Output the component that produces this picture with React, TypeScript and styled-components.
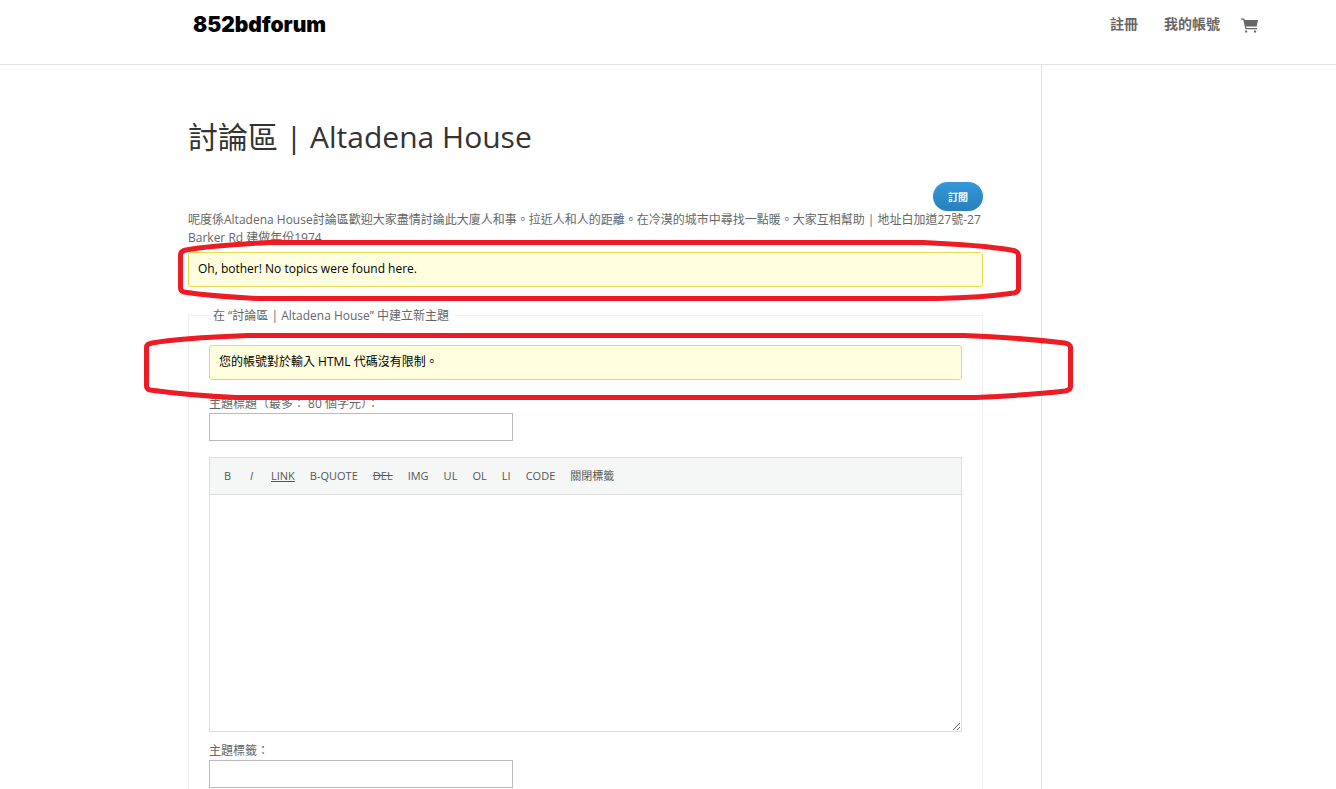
import React from "react";
import styled, { createGlobalStyle } from "styled-components";

const GlobalStyle = createGlobalStyle`
  *, *::before, *::after { box-sizing: border-box; }
  body {
    margin: 0;
    background: #fff;
    color: #666;
    font-family: "Open Sans", "Noto Sans CJK TC", sans-serif;
    font-size: 12px;
    line-height: 18px;
  }
`;

const Page = styled.div`
  display: flex;
  flex-direction: column;
  min-height: 100vh;
`;

const Header = styled.header`
  display: flex;
  justify-content: space-between;
  align-items: flex-start;
  height: 65px;
  padding: 12px 78px 0 193px;
  border-bottom: 1px solid #e2e2e2;
`;

const Logo = styled.a`
  color: #000;
  font-family: Inter, sans-serif;
  font-size: 21px;
  font-weight: 900;
  line-height: 26px;
  text-decoration: none;
`;

const Nav = styled.nav`
  display: flex;
  align-items: center;
  gap: 26px;
  height: 24px;
`;

const NavLink = styled.a`
  color: #666;
  font-size: 14px;
  font-weight: 700;
  line-height: 24px;
  text-decoration: none;
`;

const CartLink = styled.a`
  display: flex;
  margin-left: -5px;
  padding-top: 3px;
  color: #666;
`;

const Columns = styled.div`
  display: flex;
  flex: 1;
  padding: 0 78px 0 188px;
`;

const Main = styled.main`
  display: flex;
  flex: 1;
  flex-direction: column;
  padding: 57px 58px 0 0;
  border-right: 1px solid #e2e2e2;
`;

const Sidebar = styled.aside`
  width: 216px;
`;

const Title = styled.h1`
  margin: 0 0 30px;
  color: #333;
  font-size: 30px;
  font-weight: 400;
  line-height: 30px;
`;

const SubscribeButton = styled.button`
  align-self: flex-end;
  width: 50px;
  height: 29px;
  padding: 0;
  border: 0;
  border-radius: 15px;
  background: linear-gradient(#3498db, #2980b9);
  color: #fff;
  font: inherit;
  font-size: 10px;
  font-weight: 700;
`;

const Description = styled.p`
  margin: 0 0 5px;
`;

const Notice = styled.div`
  position: relative;
  height: 35px;
  padding: 7px 9px;
  border: 1px solid #e6db55;
  border-radius: 3px;
  background: #ffffe0;
  color: #000;
`;

const Marker = styled.svg<{ $side: number; $far: number; $top: number; $bottom: number }>`
  position: absolute;
  z-index: 1;
  top: -${(p) => p.$top}px;
  left: -${(p) => p.$side}px;
  width: calc(100% + ${(p) => p.$side + p.$far}px);
  height: calc(100% + ${(p) => p.$top + p.$bottom}px);
  fill: none;
  stroke: #ed1c24;
  stroke-width: 5px;
  stroke-linejoin: round;
  pointer-events: none;
`;

const TopicFieldset = styled.fieldset`
  display: flex;
  flex: 1;
  flex-direction: column;
  min-width: 0;
  margin: 19px 0 0;
  padding: 20px 20px 1px;
  border: 1px solid #eee;
  border-bottom: 0;
`;

const Legend = styled.legend`
  padding: 0 5px 0 4px;
  line-height: 19px;
`;

const Field = styled.div<{ $gap: number }>`
  display: flex;
  flex-direction: column;
  align-items: flex-start;
  margin-top: ${(p) => p.$gap}px;
`;

const TextInput = styled.input`
  width: 304px;
  max-width: 100%;
  height: 28px;
  padding: 2px 6px;
  border: 1px solid #bbb;
  background: #fff;
  color: #4e4e4e;
  font: inherit;
`;

const Editor = styled.div`
  display: flex;
  flex-direction: column;
  margin-top: 16px;
  border: 1px solid #ddd;
`;

const Toolbar = styled.div`
  display: flex;
  align-items: center;
  gap: 15px;
  height: 37px;
  padding: 0 13px;
  border-bottom: 1px solid #ddd;
  background: #f5f7f7;
`;

const ToolButton = styled.button<{ $look?: "italic" | "underline" | "strike" }>`
  min-width: 9px;
  padding: 0;
  border: 0;
  background: none;
  color: #555;
  font: inherit;
  font-size: 11px;
  font-style: ${(p) => (p.$look === "italic" ? "italic" : "normal")};
  text-decoration: ${(p) =>
    p.$look === "underline" ? "underline" : p.$look === "strike" ? "line-through" : "none"};
`;

const Content = styled.textarea`
  display: block;
  width: 100%;
  height: 236px;
  padding: 8px;
  border: 0;
  background: #fff;
  color: #333;
  font: inherit;
  resize: vertical;
`;

const tools: { label: string; look?: "italic" | "underline" | "strike" }[] = [
  { label: "B" },
  { label: "I", look: "italic" },
  { label: "LINK", look: "underline" },
  { label: "B-QUOTE" },
  { label: "DEL", look: "strike" },
  { label: "IMG" },
  { label: "UL" },
  { label: "OL" },
  { label: "LI" },
  { label: "CODE" },
  { label: "關閉標籤" },
];

export default function App() {
  return (
    <Page>
      <GlobalStyle />
      <Header>
        <Logo href="#">852bdforum</Logo>
        <Nav>
          <NavLink href="#">註冊</NavLink>
          <NavLink href="#">我的帳號</NavLink>
          <CartLink href="#" aria-label="Cart">
            <svg width="17" height="15" viewBox="0 0 17 15" fill="currentColor">
              <path d="M0 0.500h3.200L4 2h13l-1.400 6.500H5L5.400 10H16v1.200H4.400L2.300 1.700H0z" />
              <rect x="4" y="12.500" width="2.200" height="2" rx="0.600" />
              <rect x="13" y="12.500" width="2.200" height="2" rx="0.600" />
            </svg>
          </CartLink>
        </Nav>
      </Header>
      <Columns>
        <Main>
          <Title>討論區 | Altadena House</Title>
          <SubscribeButton type="button">訂閱</SubscribeButton>
          <Description>
            呢度係Altadena House討論區歡迎大家盡情討論此大廈人和事。拉近人和人的距離。在冷漠的城市中尋找一點暖。大家互相幫助 | 地址白加道27號-27 Barker Rd 建做年份1974
          </Description>
          <Notice>
            Oh, bother! No topics were found here.
            <Marker $side={11} $far={39} $top={13} $bottom={15} viewBox="0 0 843 61" preserveAspectRatio="none" aria-hidden="true">
              <path d="M92 2.500H745C780 4 815 7 833 10Q840 11 840.500 15V49Q840 52 836 53C815 56 785 58 760 58.500H80C50 57 25 55 6 52Q2.500 51 2.500 48V15Q2.500 11 8 10C30 6 60 4 92 2.500Z" />
            </Marker>
          </Notice>
          <TopicFieldset>
            <Legend>在 “討論區 | Altadena House” 中建立新主題</Legend>
            <Notice>
              您的帳號對於輸入 HTML 代碼沒有限制。
              <Marker $side={66} $far={112} $top={13} $bottom={21} viewBox="0 0 929 67" preserveAspectRatio="none" aria-hidden="true">
                <path d="M104 2.500H820C860 4 895 7 921 10Q926 11 926.500 14V54Q926 57 921 58C895 61 865 63 832 64.500H92C55 63 28 60 6 57Q2.500 56 2.500 53V14Q2.500 11 8 10C30 6 66 4 104 2.500Z" />
              </Marker>
            </Notice>
            <Field $gap={15}>
              <label htmlFor="topic-title">主題標題（最多： 80 個字元）：</label>
              <TextInput id="topic-title" type="text" maxLength={80} />
            </Field>
            <Editor>
              <Toolbar role="toolbar">
                {tools.map((t) => (
                  <ToolButton key={t.label} type="button" $look={t.look}>
                    {t.label}
                  </ToolButton>
                ))}
              </Toolbar>
              <Content aria-label="Topic content" />
            </Editor>
            <Field $gap={10}>
              <label htmlFor="topic-tags">主題標籤：</label>
              <TextInput id="topic-tags" type="text" />
            </Field>
          </TopicFieldset>
        </Main>
        <Sidebar />
      </Columns>
    </Page>
  );
}
